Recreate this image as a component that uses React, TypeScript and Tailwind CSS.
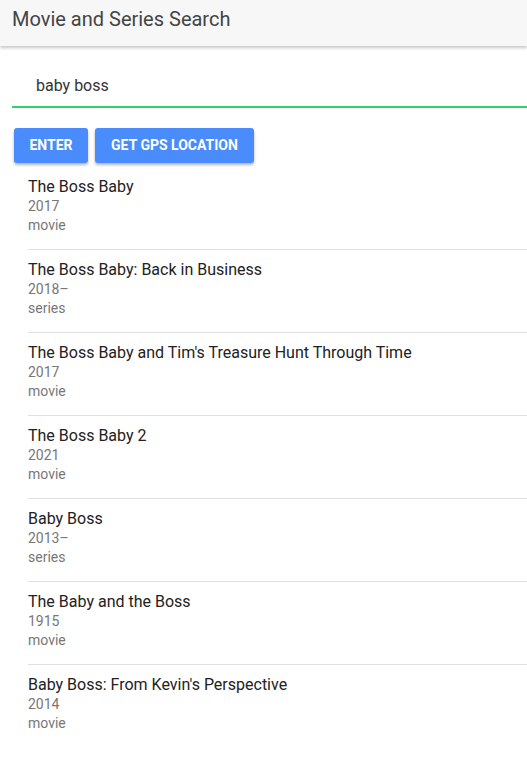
import React from "react";

const items = [
  { title: "The Boss Baby", year: "2017", type: "movie" },
  { title: "The Boss Baby: Back in Business", year: "2018–", type: "series" },
  { title: "The Boss Baby and Tim's Treasure Hunt Through Time", year: "2017", type: "movie" },
  { title: "The Boss Baby 2", year: "2021", type: "movie" },
  { title: "Baby Boss", year: "2013–", type: "series" },
  { title: "The Baby and the Boss", year: "1915", type: "movie" },
  { title: "Baby Boss: From Kevin's Perspective", year: "2014", type: "movie" },
];

export default function App() {
  return (
    <div className="min-h-[777px] w-[527px] overflow-hidden bg-white font-['Roboto',sans-serif]">
      <header className="h-[46px] bg-[#f7f7f7] shadow-[0_2px_3px_rgba(0,0,0,0.22)] flex items-center pl-[12px] relative z-10">
        <h1 className="text-[20px] text-[#444] leading-none -mt-[8px]">Movie and Series Search</h1>
      </header>
      <div className="pl-[12px] pt-[28px]">
        <div className="border-b-2 border-[#2fd266] h-[34px] pl-[24px] flex items-center">
          <span className="text-[16px] text-[#333] -mt-[8px]">baby boss</span>
        </div>
      </div>
      <div className="flex gap-[7px] pl-[14px] pt-[20px]">
        <button className="h-[35px] w-[74px] rounded-[3px] bg-[#4a8cfb] text-white text-[14px] font-bold shadow-[0_2px_3px_rgba(0,0,0,0.3)]">
          ENTER
        </button>
        <button className="h-[35px] w-[159px] rounded-[3px] bg-[#4a8cfb] text-white text-[14px] font-bold shadow-[0_2px_3px_rgba(0,0,0,0.3)]">
          GET GPS LOCATION
        </button>
      </div>
      <ul className="pl-[28px] mt-[4px]">
        {items.map((it, i) => (
          <li
            key={i}
            className={`pt-[10px] pb-[14px] ${i < items.length - 1 ? "border-b border-[#e0e0e0]" : ""}`}
          >
            <div className="text-[16px] leading-[20px] text-[#222]">{it.title}</div>
            <div className="text-[14px] leading-[19px] text-[#777]">{it.year}</div>
            <div className="text-[14px] leading-[19px] text-[#777]">{it.type}</div>
          </li>
        ))}
      </ul>
    </div>
  );
}
